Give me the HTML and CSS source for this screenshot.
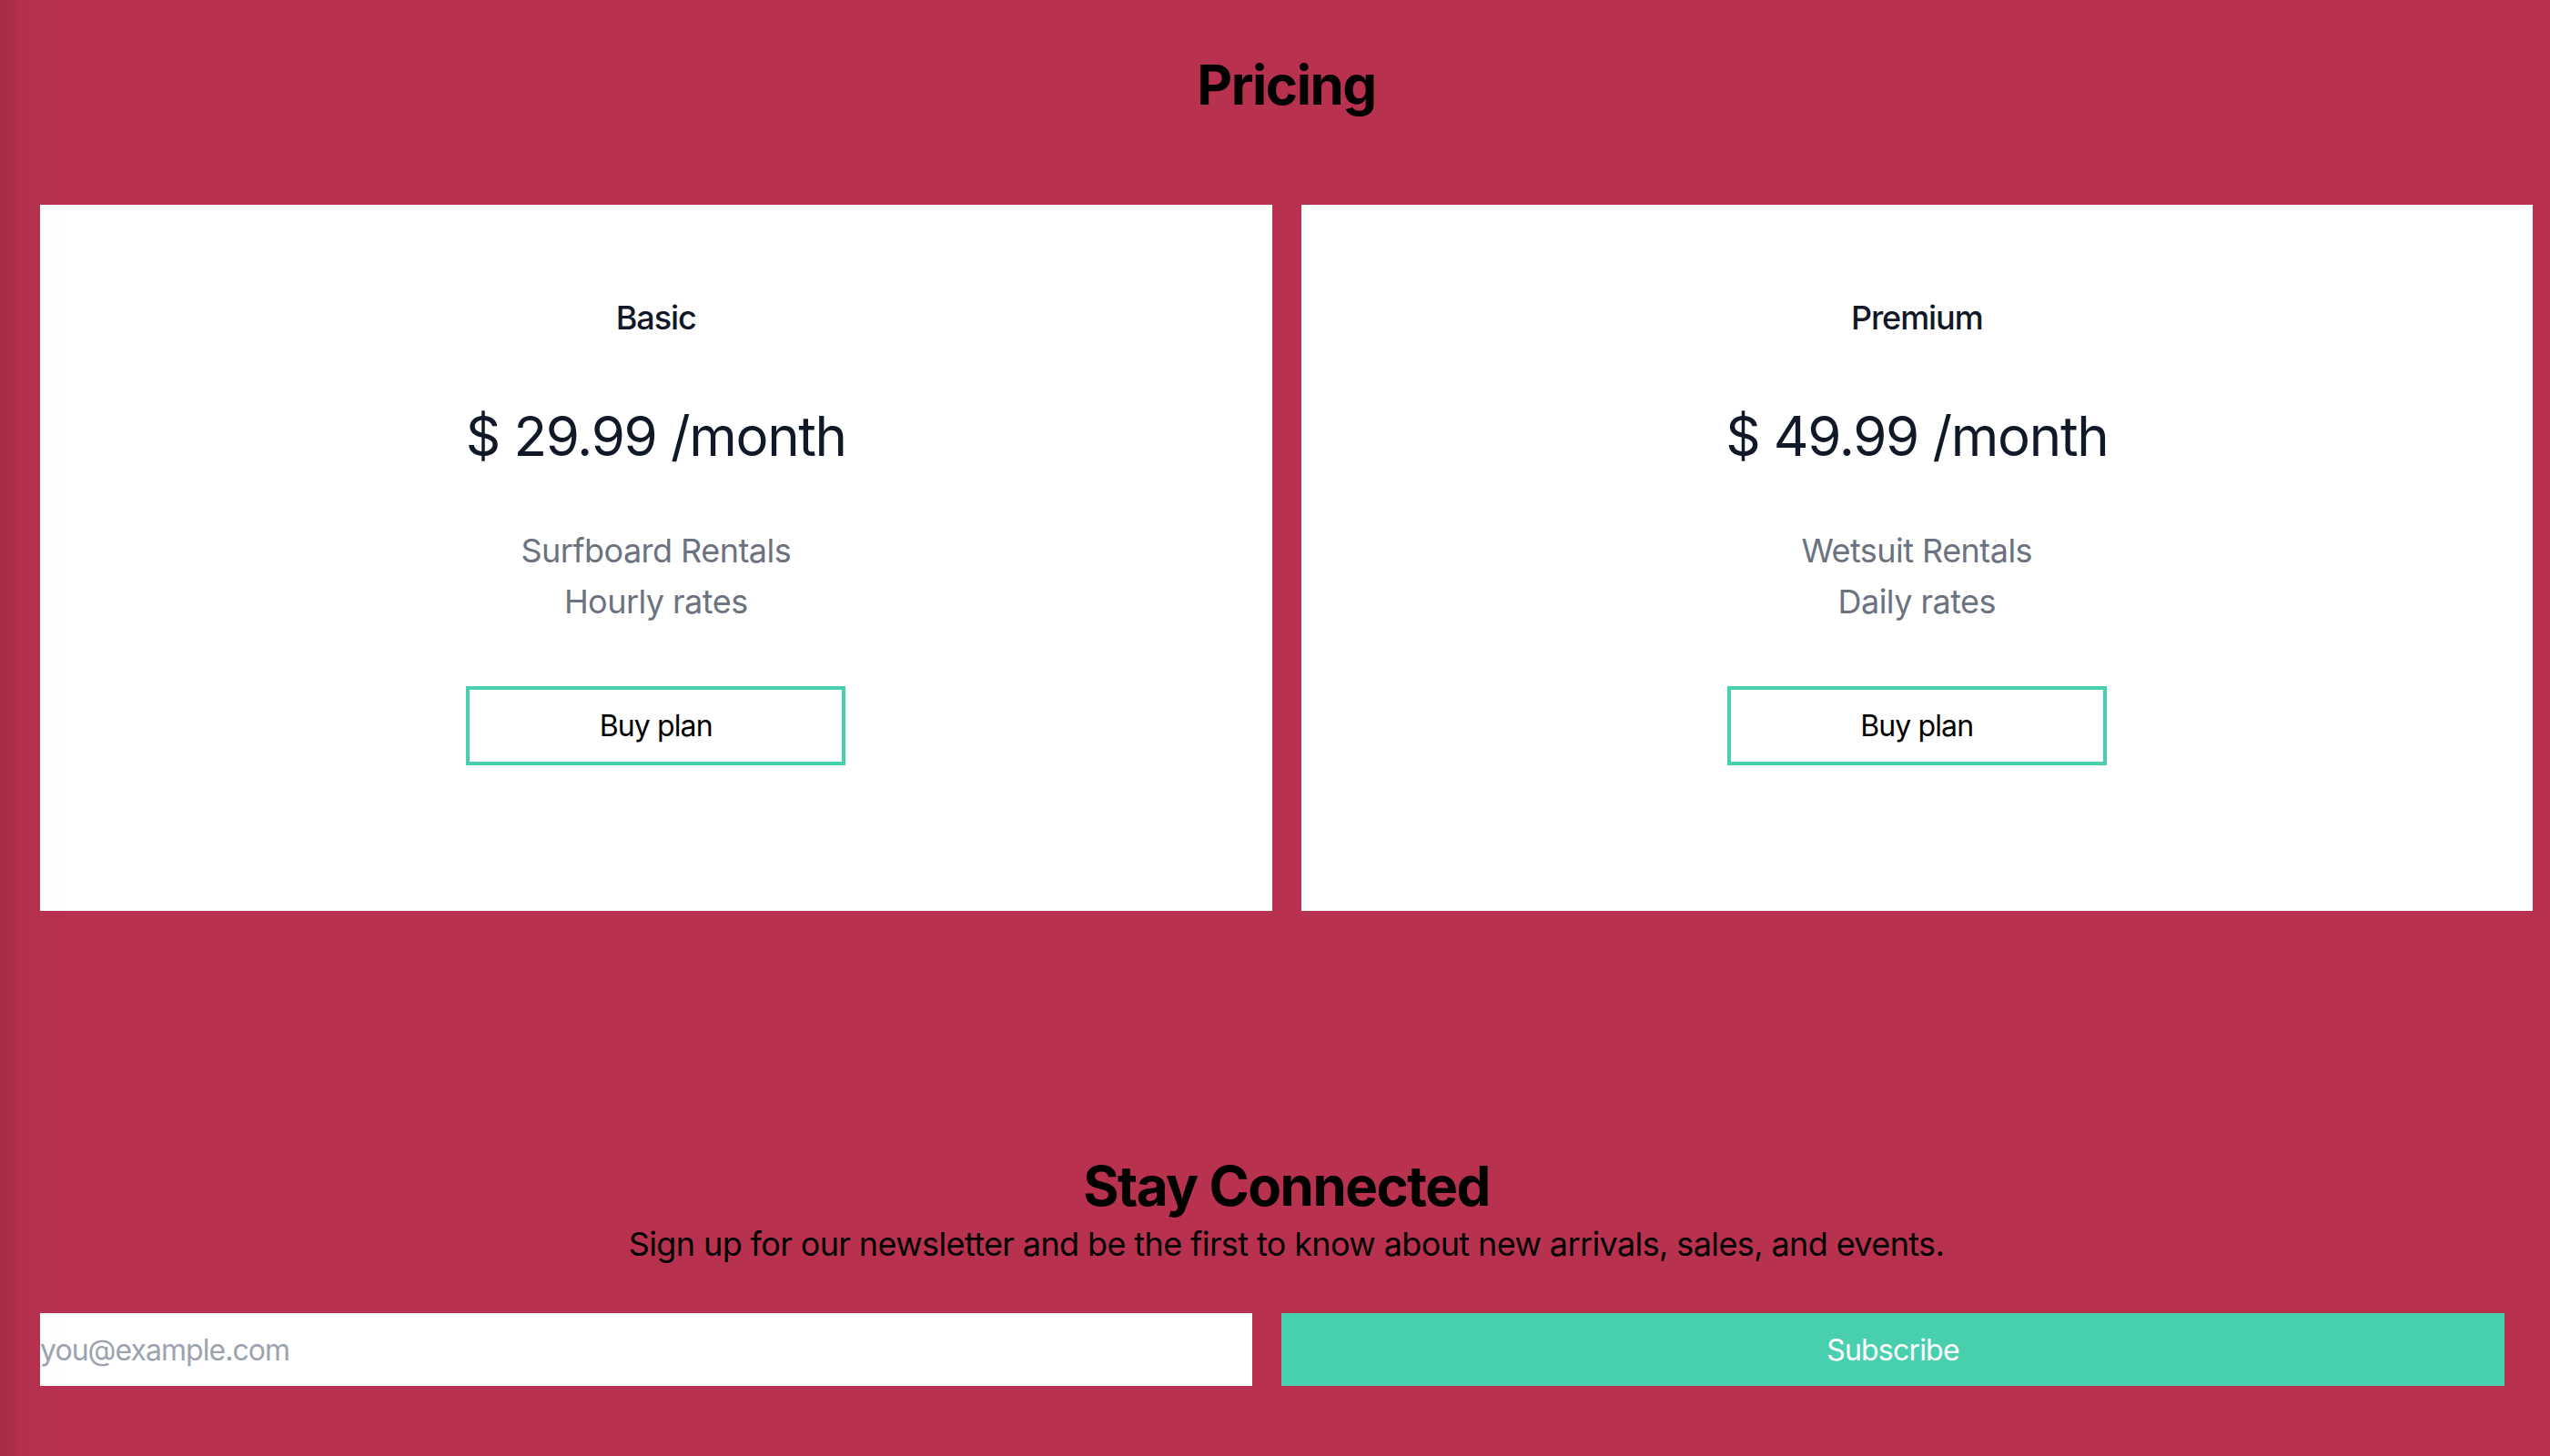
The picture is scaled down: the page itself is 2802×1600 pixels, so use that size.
FILE: index.html
```html
<!DOCTYPE html>
<html lang="en">
<head>
<meta charset="utf-8">
<title>Pricing</title>
<link rel="stylesheet" href="styles.css">
</head>
<body>
<div class="page">
  <section class="pricing">
    <h2 class="section-title">Pricing</h2>
    <div class="plans">
      <div class="plan">
        <h3 class="plan-name">Basic</h3>
        <p class="plan-price">$ 29.99 /month</p>
        <ul class="plan-features">
          <li>Surfboard Rentals</li>
          <li>Hourly rates</li>
        </ul>
        <button class="plan-btn" type="button">Buy plan</button>
      </div>
      <div class="plan">
        <h3 class="plan-name">Premium</h3>
        <p class="plan-price">$ 49.99 /month</p>
        <ul class="plan-features">
          <li>Wetsuit Rentals</li>
          <li>Daily rates</li>
        </ul>
        <button class="plan-btn" type="button">Buy plan</button>
      </div>
    </div>
  </section>
  <section class="newsletter">
    <h2 class="section-title">Stay Connected</h2>
    <p class="newsletter-sub">Sign up for our newsletter and be the first to know about new arrivals, sales, and events.</p>
    <form class="newsletter-form">
      <input class="newsletter-input" type="email" placeholder="you@example.com">
      <button class="newsletter-btn" type="button">Subscribe</button>
    </form>
  </section>
</div>
</body>
</html>
```

FILE: styles.css
```css
html, body {
  margin: 0;
  padding: 0;
}

body {
  background: #b8324f;
  font-family: Inter, "Noto Sans", "Liberation Sans", sans-serif;
  color: #000;
}

.page {
  min-height: 1600px;
  box-sizing: border-box;
  padding: 57px 19px 0 44px;
}

.page::before {
  content: "";
  position: fixed;
  left: 0;
  top: 0;
  bottom: 0;
  width: 70px;
  background: linear-gradient(to right, rgba(40, 0, 10, 0.12) 0, rgba(40, 0, 10, 0.03) 24px, rgba(0, 0, 0, 0.012) 44px, rgba(0, 0, 0, 0) 70px);
  pointer-events: none;
  z-index: 5;
}

.section-title {
  margin: 0;
  font-size: 60px;
  line-height: 72px;
  font-weight: 700;
  letter-spacing: -0.025em;
  text-align: center;
  color: #000;
}

.plans {
  display: grid;
  grid-template-columns: 1fr 1fr;
  gap: 32px;
  margin-top: 96px;
}

.plan {
  background: #fff;
  padding: 96px 0 160px;
  display: flex;
  flex-direction: column;
  align-items: center;
  text-align: center;
}

.plan-name {
  margin: 0;
  font-size: 36px;
  line-height: 56px;
  font-weight: 500;
  letter-spacing: -0.03em;
  color: #111827;
}

.plan-price {
  margin: 66px 0 0;
  font-size: 60px;
  line-height: 72px;
  font-weight: 400;
  letter-spacing: -0.022em;
  color: #111827;
}

.plan-features {
  list-style: none;
  margin: 62px 0 0;
  padding: 0;
  font-size: 36px;
  line-height: 56px;
  font-weight: 400;
  color: #6b7280;
  letter-spacing: -0.015em;
}

.plan-btn {
  margin-top: 65px;
  width: 417px;
  box-sizing: border-box;
  padding: 16px 0;
  border: 4px solid #48cfae;
  background: #fff;
  font-family: inherit;
  font-size: 32px;
  line-height: 47px;
  letter-spacing: -0.028em;
  color: #000;
  cursor: pointer;
}

.newsletter {
  margin-top: 266px;
}

.newsletter-sub {
  margin: 0;
  font-size: 36px;
  line-height: 56px;
  letter-spacing: -0.017em;
  text-align: center;
  color: #000;
}

.newsletter-form {
  display: flex;
  gap: 32px;
  margin: 48px 31px 0 0;
}

.newsletter-input {
  flex: 1;
  min-width: 0;
  height: 80px;
  box-sizing: border-box;
  border: 0;
  padding: 0;
  margin: 0;
  background: #fff;
  font-family: inherit;
  font-size: 32px;
  letter-spacing: -0.03em;
  color: #111827;
  outline: none;
}

.newsletter-input::placeholder {
  color: #9ca3af;
}

.newsletter-btn {
  flex: 1;
  height: 80px;
  border: 0;
  margin: 0;
  background: #48cfae;
  color: #fff;
  font-family: inherit;
  font-size: 32px;
  letter-spacing: -0.025em;
  cursor: pointer;
}
```
